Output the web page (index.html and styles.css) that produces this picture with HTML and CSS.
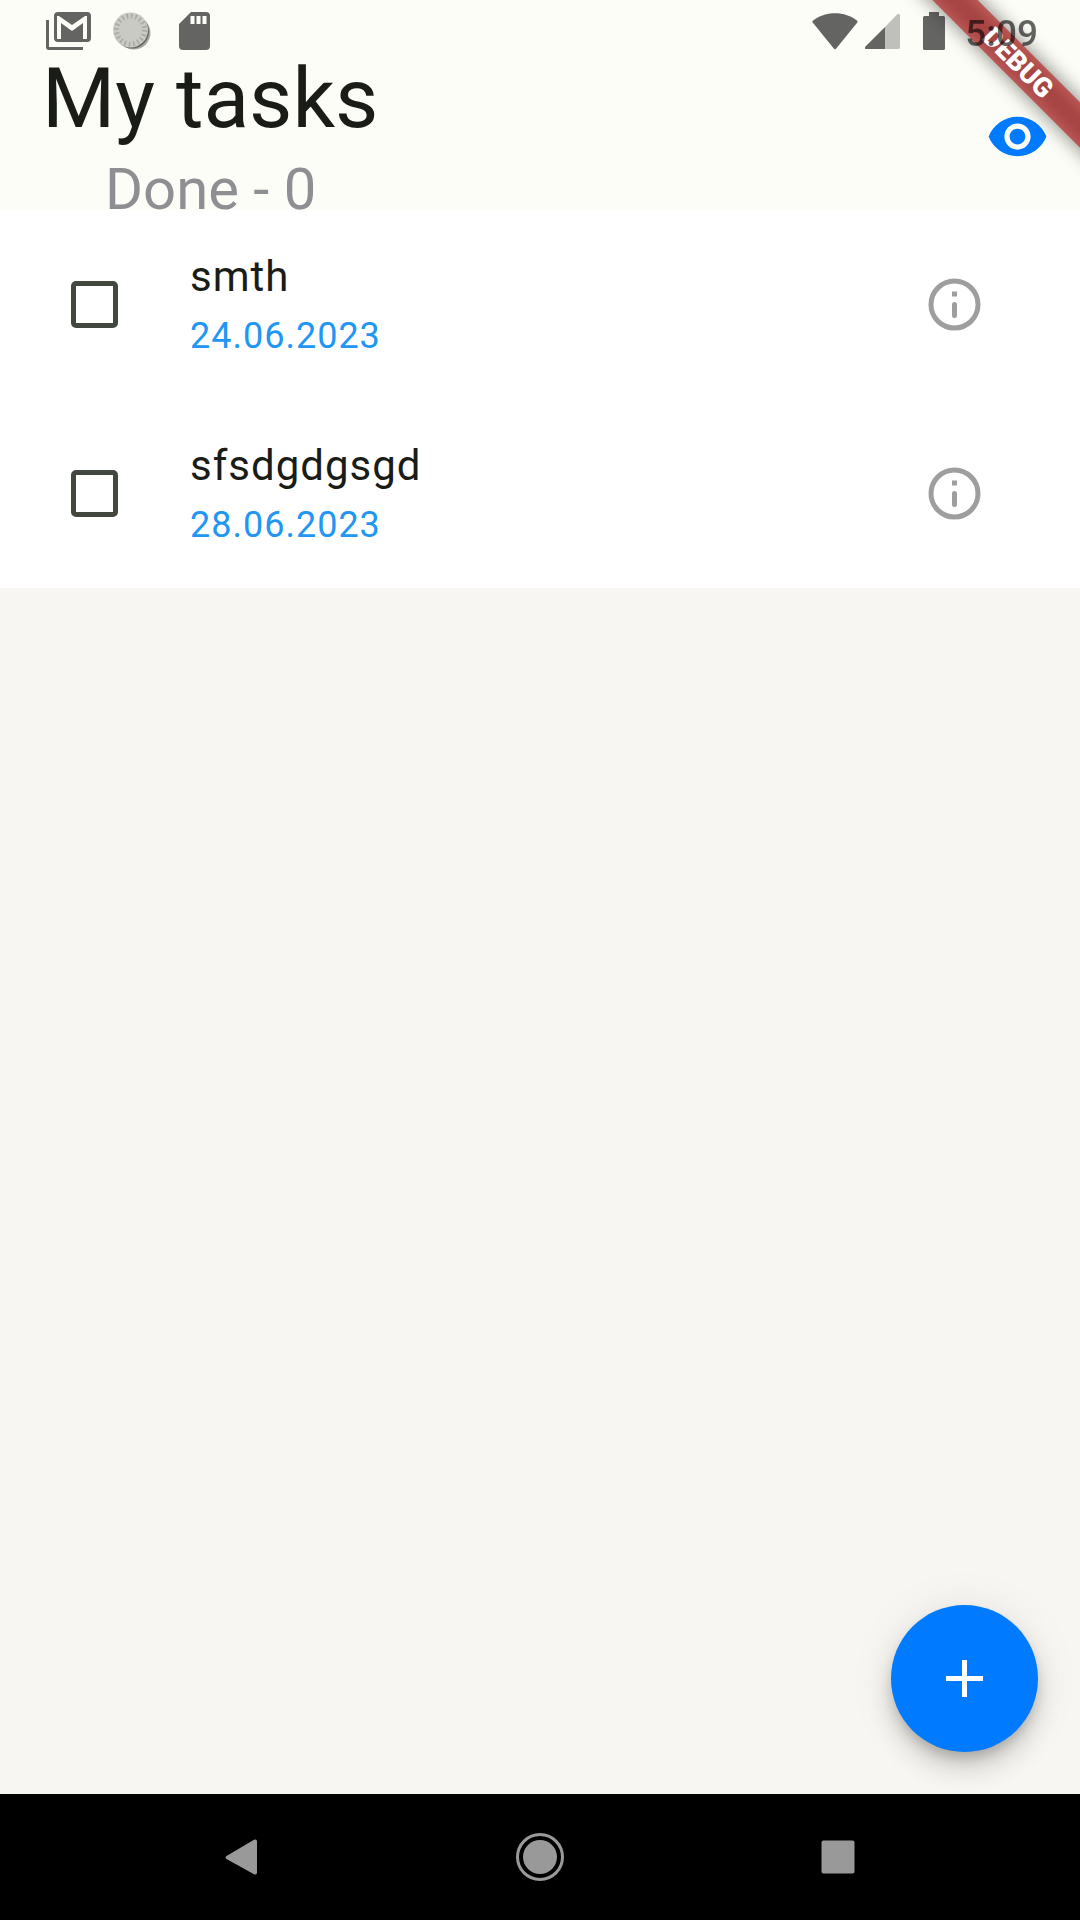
FILE: index.html
```html
<!DOCTYPE html>
<html lang="en">
<head>
<meta charset="utf-8">
<meta name="viewport" content="width=device-width, initial-scale=1">
<title>My tasks</title>
<link rel="stylesheet" href="styles.css">
</head>
<body>
<div class="debug-corner" aria-hidden="true">
  <div class="debug-banner"><span class="debug-text">DEBUG</span></div>
</div>

<div class="status-bar">
  <div class="status-group">
    <svg class="icon-mail" width="46" height="38" viewBox="0 0 46 38">
      <path d="M0 8h3v27h34v3H3a3 3 0 0 1-3-3z"/>
      <path fill-rule="evenodd" d="M12 0h29a4 4 0 0 1 4 4v22a4 4 0 0 1-4 4H12a4 4 0 0 1-4-4V4a4 4 0 0 1 4-4zM11 4v23h4V11l11 8 11-8v16h4V4h-2L26 13 13 4z"/>
    </svg>
    <svg class="icon-sync" width="38" height="38" viewBox="0 0 38 38">
      <circle cx="21" cy="21" r="16.500" fill="#72736f"/>
      <circle cx="19" cy="19.500" r="17" fill="#000"/>
      <circle cx="17.500" cy="18" r="17.500" fill="#a8a9a3"/>
      <circle cx="17.500" cy="18" r="14" fill="none" stroke="#72736f" stroke-width="5" stroke-dasharray="1.600 2.798"/>
    </svg>
    <svg class="icon-card" width="31" height="38" viewBox="0 0 31 38">
      <path fill-rule="evenodd" d="M12 0h15a4 4 0 0 1 4 4v30a4 4 0 0 1-4 4H4a4 4 0 0 1-4-4V12zM11.500 4v8h4V4zM17.500 4v8h4V4zM23.500 4v8h4V4z"/>
    </svg>
  </div>
  <div class="status-group">
    <svg class="icon-wifi" width="46" height="37" viewBox="0 0 46 37">
      <path d="M.8 7.800C7 2.800 14.500.2 23 .2s16 2.600 22.200 7.600q.8.800.1 1.700L24 35.700q-1 1-2 0L.7 9.500q-.7-.9.1-1.700z"/>
    </svg>
    <svg class="icon-signal" width="35" height="36" viewBox="0 0 35 36">
      <path opacity=".4" d="M20 14 32 1.500q3-2 3 1V34q0 2-2 2H20z"/>
      <path d="M20 14v22H1.500Q-1 36 .5 33.500z"/>
    </svg>
    <svg class="icon-battery" width="22" height="38" viewBox="0 0 22 38">
      <path d="M6 0h10v4h4.500Q22 4 22 5.500v31q0 1.500-1.500 1.500h-19Q0 38 0 36.500v-31Q0 4 1.500 4H6z"/>
    </svg>
    <time class="clock">5:09</time>
  </div>
</div>

<header class="header">
  <div class="headings">
    <h1 class="title">My tasks</h1>
    <p class="done">Done - 0</p>
  </div>
  <button class="icon-button" type="button" aria-label="Show completed tasks">
    <svg width="63" height="63" viewBox="0 0 24 24"><path fill="#007aff" d="M12 4.500C7 4.500 2.730 7.610 1 12c1.730 4.390 6 7.500 11 7.500s9.270-3.110 11-7.500c-1.730-4.390-6-7.500-11-7.500zM12 17c-2.760 0-5-2.240-5-5s2.240-5 5-5 5 2.240 5 5-2.240 5-5 5zm0-8c-1.660 0-3 1.340-3 3s1.340 3 3 3 3-1.340 3-3-1.340-3-3-3z"/></svg>
  </button>
</header>

<main class="content">
  <ul class="tasks">
    <li class="task">
      <input class="task-check" type="checkbox" id="task-1">
      <label class="task-label" for="task-1">
        <span class="task-name">smth</span>
        <span class="task-date">24.06.2023</span>
      </label>
      <button class="icon-button" type="button" aria-label="Details of smth">
        <svg width="63" height="63" viewBox="0 0 63 63"><circle cx="31.500" cy="31.500" r="23.500" fill="none" stroke="#9e9e9e" stroke-width="5"/><path fill="#9e9e9e" d="M29 18.500h5v5h-5z"/><path stroke="#9e9e9e" stroke-width="5" stroke-linecap="round" d="M31.500 31.500v11"/></svg>
      </button>
    </li>
    <li class="task">
      <input class="task-check" type="checkbox" id="task-2">
      <label class="task-label" for="task-2">
        <span class="task-name">sfsdgdgsgd</span>
        <span class="task-date">28.06.2023</span>
      </label>
      <button class="icon-button" type="button" aria-label="Details of sfsdgdgsgd">
        <svg width="63" height="63" viewBox="0 0 63 63"><circle cx="31.500" cy="31.500" r="23.500" fill="none" stroke="#9e9e9e" stroke-width="5"/><path fill="#9e9e9e" d="M29 18.500h5v5h-5z"/><path stroke="#9e9e9e" stroke-width="5" stroke-linecap="round" d="M31.500 31.500v11"/></svg>
      </button>
    </li>
  </ul>
  <button class="fab" type="button" aria-label="Add task">
    <svg width="37" height="37" viewBox="0 0 37 37"><path fill="#fff" d="M16 0h5v16h16v5H21v16h-5V21H0v-5h16z"/></svg>
  </button>
</main>

<nav class="nav-bar" aria-label="System navigation">
  <button class="nav-button" type="button" aria-label="Back">
    <svg width="48" height="48" viewBox="0 0 48 48"><path fill="#999" d="M8.500 23 36 6.800q3-1.300 3 1.700v31q0 3-3 1.700L8.500 26q-2-1.500 0-3z"/></svg>
  </button>
  <button class="nav-button" type="button" aria-label="Home">
    <svg width="48" height="48" viewBox="0 0 48 48"><circle cx="24" cy="24" r="22.500" fill="none" stroke="#999" stroke-width="3"/><circle cx="24" cy="24" r="17" fill="#999"/></svg>
  </button>
  <button class="nav-button" type="button" aria-label="Recent apps">
    <svg width="48" height="48" viewBox="0 0 48 48"><rect x="7.500" y="7.500" width="33" height="33" rx="2" fill="#999"/></svg>
  </button>
</nav>
</body>
</html>
```

FILE: styles.css
```css
* {
  box-sizing: border-box;
}

body {
  position: relative;
  display: flex;
  flex-direction: column;
  min-height: 100vh;
  margin: 0;
  background: #f7f6f2;
  color: #1a1c18;
  font-family: Roboto, "Liberation Sans", sans-serif;
}

button {
  display: flex;
  align-items: center;
  justify-content: center;
  margin: 0;
  padding: 0;
  border: 0;
  background: none;
}

svg {
  display: block;
}

/* System status bar, drawn over the app */
.status-bar {
  position: absolute;
  z-index: 3;
  top: 0;
  left: 0;
  right: 0;
  display: flex;
  justify-content: space-between;
  height: 63px;
  padding: 0 42px 0 46px;
  pointer-events: none;
}

.status-group {
  display: flex;
  align-items: center;
  height: 62px;
  fill: #000;
  opacity: 0.6;
}

.icon-mail {
  margin-right: 21px;
}

.icon-sync {
  margin-right: 28px;
}

.icon-wifi {
  margin-right: 7px;
}

.icon-signal {
  margin-right: 23px;
}

.icon-battery {
  margin-right: 20px;
}

.clock {
  padding-top: 5px;
  color: #000;
  font-size: 37px;
  font-weight: 500;
  line-height: 42px;
}

/* Corner ribbon */
.debug-corner {
  position: absolute;
  z-index: 2;
  top: 0;
  right: 0;
  width: 210px;
  height: 210px;
  overflow: hidden;
  pointer-events: none;
}

.debug-banner {
  position: absolute;
  top: 47px;
  right: -88px;
  display: flex;
  align-items: center;
  justify-content: center;
  width: 300px;
  height: 32px;
  transform: rotate(45deg);
}

.debug-banner::before,
.debug-banner::after {
  position: absolute;
  inset: 0;
  background: rgba(0, 0, 0, 0.5);
  content: "";
  filter: blur(10px);
}

.debug-banner::after {
  background: rgba(183, 28, 28, 0.63);
  filter: none;
}

.debug-text {
  position: relative;
  z-index: 1;
  color: #fff;
  font-size: 27px;
  font-weight: 900;
  line-height: 32px;
}

/* App header */
.header {
  display: flex;
  align-items: flex-end;
  justify-content: space-between;
  padding: 50px 31px 0 42px;
  background: #fcfdf6;
}

.header .icon-button {
  margin-bottom: 42px;
}

.headings {
  display: flex;
  flex-direction: column;
  gap: 20px;
}

.title {
  margin: 0;
  font-size: 84px;
  font-weight: 400;
  line-height: 98px;
}

.done {
  margin: 0;
  padding-left: 63px;
  color: #8e8e93;
  font-size: 58px;
  line-height: 42px;
}

/* Task list */
.content {
  position: relative;
  flex: 1;
}

.tasks {
  margin: 0;
  padding: 0;
  background: #fff;
  list-style: none;
}

.task {
  display: flex;
  align-items: center;
  min-height: 189px;
  padding: 0 94px 0 71px;
}

.task-check {
  flex: none;
  width: 47px;
  height: 47px;
  margin: 0 72px 0 0;
  border: 5px solid #43483e;
  border-radius: 5px;
  appearance: none;
}

.task-check:checked {
  background: #007aff;
}

.task-label {
  display: flex;
  flex: 1;
  flex-direction: column;
  letter-spacing: 1px;
}

.task-name {
  font-size: 42px;
  line-height: 62px;
}

.task-date {
  color: #2196f3;
  font-size: 36px;
  line-height: 56px;
}

/* Floating action button */
.fab {
  position: absolute;
  right: 42px;
  bottom: 42px;
  width: 147px;
  height: 147px;
  border-radius: 50%;
  background: #007aff;
  box-shadow: 0 8px 13px -3px rgba(0, 0, 0, 0.2), 0 16px 26px rgba(0, 0, 0, 0.14), 0 3px 47px rgba(0, 0, 0, 0.08);
}

/* System navigation bar */
.nav-bar {
  display: flex;
  justify-content: center;
  height: 126px;
  background: #000;
}

.nav-button {
  flex: 0 1 298px;
}
```
